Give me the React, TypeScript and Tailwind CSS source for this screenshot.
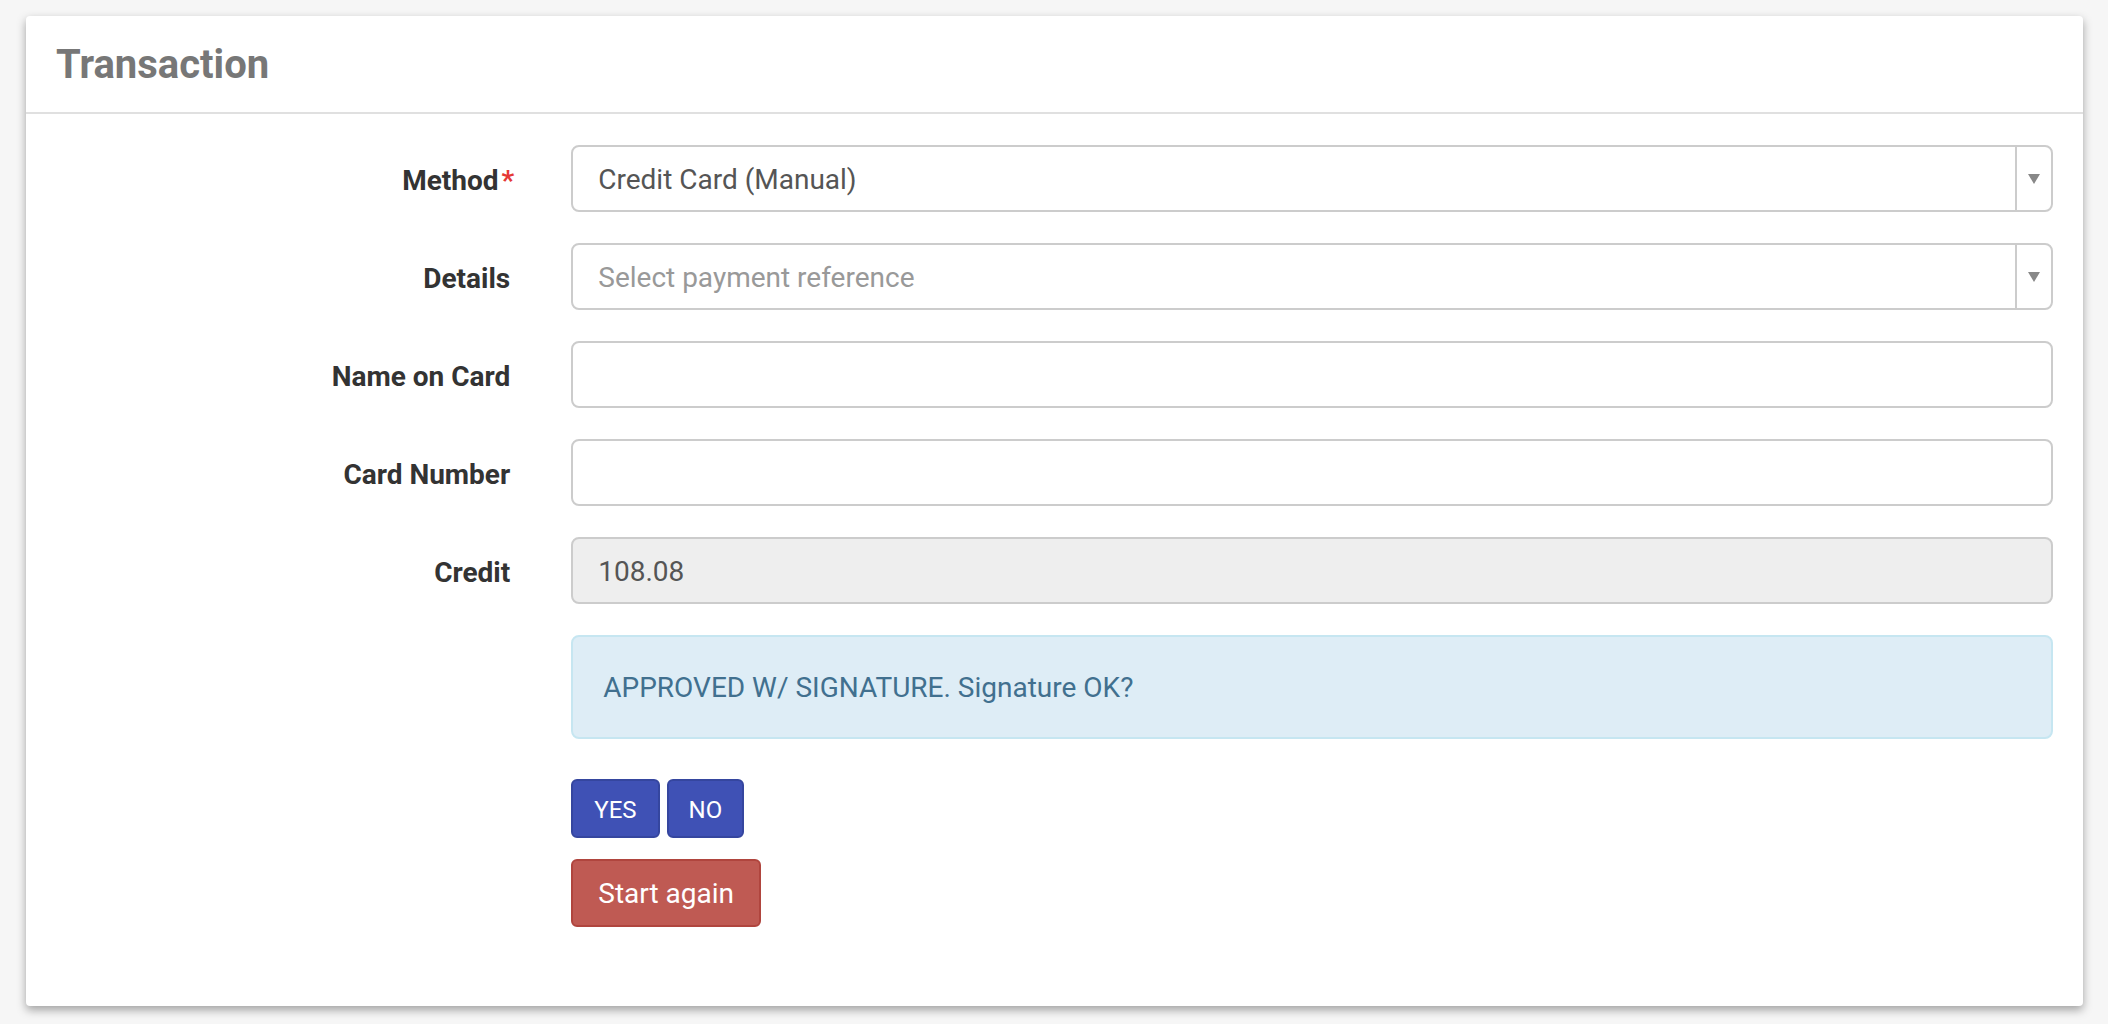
import React from "react";

const font = { fontFamily: "Roboto, 'Noto Sans', 'Liberation Sans', sans-serif" };

function Label({ children, required }: { children: React.ReactNode; required?: boolean }) {
  return (
    <div className="w-1/4 shrink-0 pr-[30px] pt-[4px] text-right text-[28px] font-bold text-[#333]">
      {children}
      {required && <span className="-mr-[4px] ml-[3px] text-[#e53935]">*</span>}
    </div>
  );
}

function Select({ value, placeholder }: { value?: string; placeholder?: string }) {
  return (
    <div className="flex h-[67px] rounded-[8px] border-2 border-[#ccc] bg-white">
      <div className={`flex flex-1 items-center pl-[25px] pt-[3px] text-[28px] ${value ? "text-[#555]" : "text-[#999]"}`}>
        {value ?? placeholder}
      </div>
      <div className="flex w-[36px] items-center justify-center border-l-2 border-[#ccc]">
        <div className="h-0 w-0 border-l-[6px] border-r-[6px] border-t-[10px] border-l-transparent border-r-transparent border-t-[#888]" />
      </div>
    </div>
  );
}

function Input({ value, disabled }: { value?: string; disabled?: boolean }) {
  return (
    <div
      className={`flex h-[67px] items-center rounded-[8px] border-2 border-[#ccc] pl-[25px] pt-[3px] text-[28px] text-[#555] ${
        disabled ? "bg-[#eee]" : "bg-white"
      }`}
    >
      {value}
    </div>
  );
}

function Row({ label, required, children }: { label?: string; required?: boolean; children: React.ReactNode }) {
  return (
    <div className="mb-[31px] flex items-center">
      <Label required={required}>{label}</Label>
      <div className="flex-1 pl-[31px] pr-[30px]">{children}</div>
    </div>
  );
}

export default function App() {
  return (
    <div className="min-h-screen bg-[#f6f6f6] pl-[26px] pr-[25px] pt-[16px]" style={font}>
      <div className="rounded-[4px] bg-white shadow-[0_4px_10px_rgba(0,0,0,0.35)]">
        <div className="flex h-[98px] items-center border-b-2 border-[#e0e0e0] pl-[30px] pt-[2px]">
          <h1 className="text-[40px] font-bold text-[#777]">Transaction</h1>
        </div>
        <div className="pb-[79px] pt-[31px]">
          <Row label="Method" required>
            <Select value="Credit Card (Manual)" />
          </Row>
          <Row label="Details">
            <Select placeholder="Select payment reference" />
          </Row>
          <Row label="Name on Card">
            <Input />
          </Row>
          <Row label="Card Number">
            <Input />
          </Row>
          <Row label="Credit">
            <Input value="108.08" disabled />
          </Row>
          <div className="flex">
            <div className="w-1/4 shrink-0" />
            <div className="flex-1 pl-[31px] pr-[30px]">
              <div className="rounded-[8px] border-2 border-[#c6e6f1] bg-[#deedf6] px-[30px] pb-[29px] pt-[31px] text-[28px] leading-[40px] text-[#41708f]">
                APPROVED W/ SIGNATURE. Signature OK?
              </div>
              <div className="mt-[40px] flex gap-[7px]">
                <button className="h-[59px] rounded-[6px] border-2 border-[#35469f] bg-[#3f51b5] px-[21px] pt-[2px] text-[24px] text-white">
                  YES
                </button>
                <button className="h-[59px] rounded-[6px] border-2 border-[#35469f] bg-[#3f51b5] px-[20px] pt-[2px] text-[24px] text-white">
                  NO
                </button>
              </div>
              <button className="mt-[21px] h-[68px] rounded-[6px] border-2 border-[#b0453e] bg-[#bf5a53] px-[25px] pt-[2px] text-[28px] text-white">
                Start again
              </button>
            </div>
          </div>
        </div>
      </div>
    </div>
  );
}
